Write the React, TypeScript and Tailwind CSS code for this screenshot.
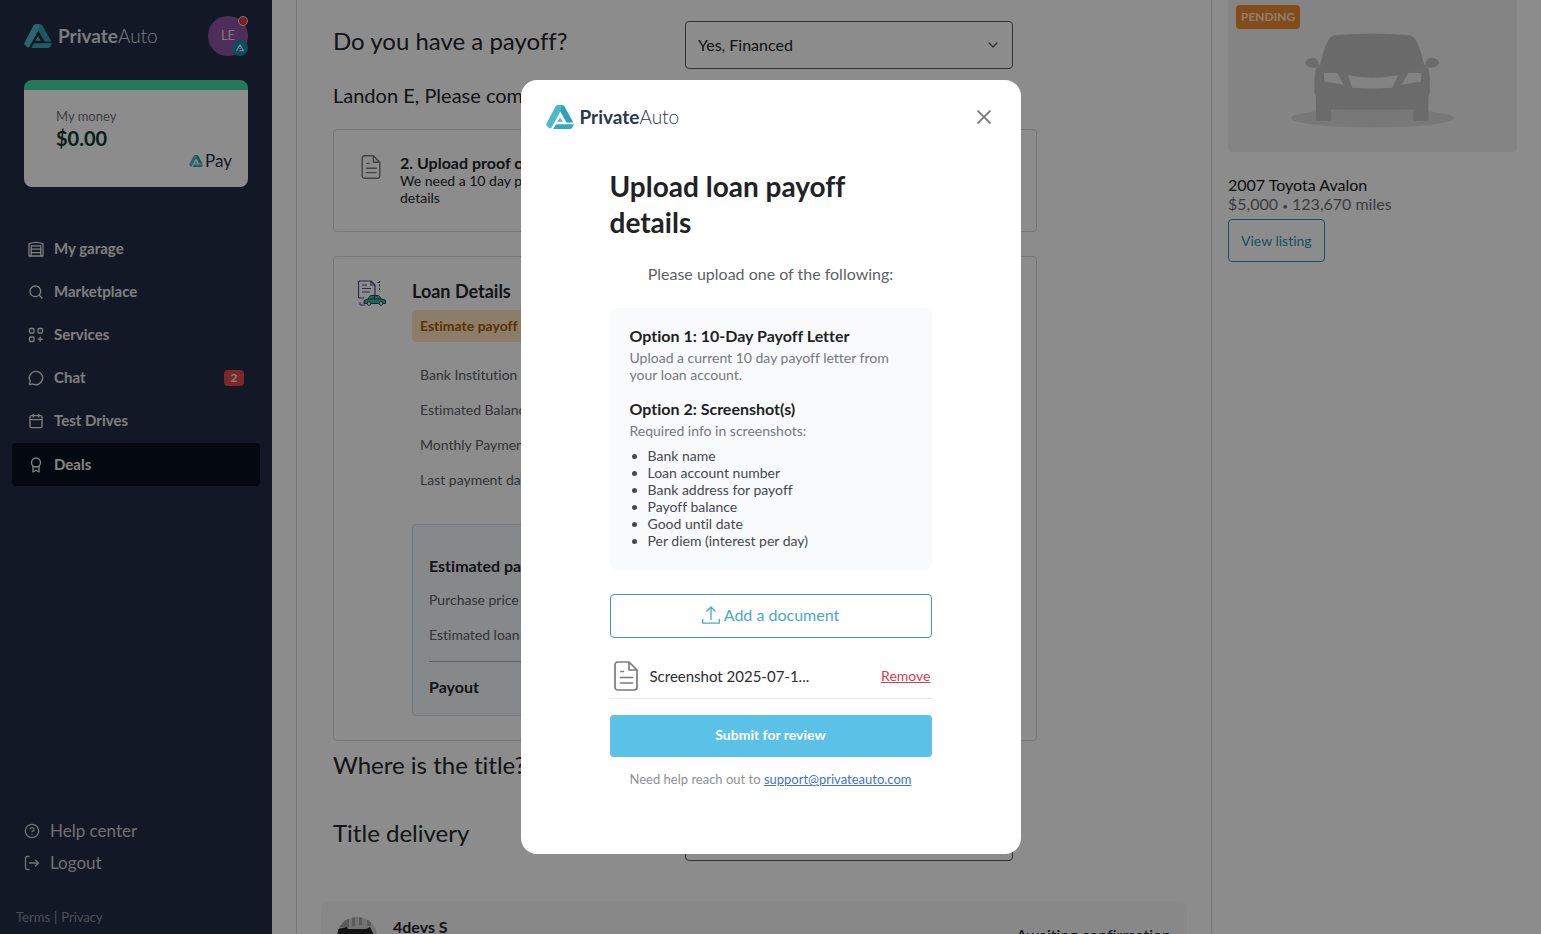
import type { ReactNode } from "react";
import { Calendar, ChevronDown, CircleHelp, MessageCircle, Search } from "lucide-react";

function LogoMark({ className }: { className?: string }) {
  return (
    <svg viewBox="0 0 28 24" className={className} aria-hidden="true">
      <path
        d="M12 0h4q1.700 0 2.500 1.500L27.300 17.600h-6.800L14 6z"
        fill="#2f9fb5"
      />
      <path
        d="M.3 19 9.500 1.500Q10.300 0 12 0h2.500L15.500 3 14 7.200 5.500 22.600q-.6 1-1.600.9-.9 0-1.400-.9L.4 20.200q-.4-.5-.1-1.200z"
        fill="#4bb9c9"
      />
      <path d="M10 19.200H28L26.200 22.800Q25.500 24 24.200 24H7.200z" fill="#35a9bb" />
      <path d="M14 12.500 16.800 16.800h-5.400z" fill="#4bb9c9" />
    </svg>
  );
}

function Logo({ dark }: { dark?: boolean }) {
  return (
    <div className="flex items-center gap-1.5">
      <LogoMark className="h-6 w-7" />
      <span
        className={
          dark ? "text-[19px] leading-[22px] text-[#dfe1e6]" : "text-[19px] leading-[22px] text-[#2b3650]"
        }
      >
        <span className="font-bold">Private</span>
        <span className="font-light">Auto</span>
      </span>
    </div>
  );
}

function Stroke({ children, className = "size-4" }: { children: ReactNode; className?: string }) {
  return (
    <svg
      viewBox="0 0 16 16"
      className={className}
      fill="none"
      stroke="currentColor"
      strokeWidth="1.3"
      strokeLinecap="round"
      strokeLinejoin="round"
      aria-hidden="true"
    >
      {children}
    </svg>
  );
}

const GarageIcon = () => (
  <Stroke>
    <path d="M1 2.800Q8-.2 15 2.800V15h-2.300V4.800H3.300V15H1z" />
    <path d="M3.300 8.200h9.400M3.300 11.600h9.400M3.300 15h9.400" />
  </Stroke>
);

const ServicesIcon = () => (
  <Stroke>
    <rect x="1.500" y="1.500" width="4.500" height="4.500" rx="1" />
    <rect x="10" y="1.500" width="4.500" height="4.500" rx="1" />
    <rect x="1.500" y="10" width="4.500" height="4.500" rx="1" />
    <path d="M12.200 10.200v4M10.200 12.200h4" />
  </Stroke>
);

const DealsIcon = () => (
  <Stroke>
    <circle cx="8" cy="5.500" r="4.500" />
    <path d="M5 9v6l3-1.800L11 15V9" />
  </Stroke>
);

const LogoutIcon = () => (
  <Stroke>
    <path d="M5 1.500H3Q1.500 1.500 1.500 3v10q0 1.500 1.500 1.500h2M5.500 8h9M11.500 5l3 3-3 3" />
  </Stroke>
);

function DocIcon({ className }: { className: string }) {
  return (
    <svg
      viewBox="0 0 24 30"
      className={className}
      fill="none"
      stroke="currentColor"
      strokeWidth="1.7"
      strokeLinejoin="round"
      aria-hidden="true"
    >
      <path d="M4 1h11l8 8v17q0 3-3 3H4q-3 0-3-3V4q0-3 3-3z" />
      <path d="M15 1v8h8" />
      <path d="M7 10.500h2.500M6.500 16.500h12M6.500 22h12" strokeLinecap="round" />
    </svg>
  );
}

function LoanIcon() {
  return (
    <svg viewBox="0 0 28 26" className="h-[26px] w-7" fill="none" strokeLinejoin="round" aria-hidden="true">
      <path d="M6 18H1.500Q.5 18 .5 17V2Q.5 1 1.500 1H13l4 4v10" stroke="#4a4f86" strokeWidth="1.200" />
      <path d="M13 1v4h4M4 5h5M4 8.500h9M4 12h8" stroke="#4a4f86" strokeWidth="1.200" />
      <path d="M21.500 1v11M19.500 2.500h3" stroke="#4a4f86" strokeDasharray="2 1.500" />
      <path d="M2 22v3h5" stroke="#4a4f86" />
      <path
        d="M6 23.500v-3l4-1.500 2.500-3.500h8L23.500 19l4 1.200v3.300z"
        fill="#2fc49a"
        stroke="#33406b"
      />
      <path d="M10 19h13.500M16.500 15.500V19" stroke="#33406b" />
      <circle cx="11" cy="23.500" r="1.800" fill="#fff" stroke="#33406b" />
      <circle cx="23" cy="23.500" r="1.800" fill="#fff" stroke="#33406b" />
    </svg>
  );
}

function CarPlaceholder() {
  return (
    <svg viewBox="845 95 475 280" className="h-[97px] w-[164px]" aria-hidden="true">
      <ellipse cx="1081" cy="344" rx="236" ry="27" fill="#dadada" />
      <path
        d="M970 104Q1080 94 1190 104Q1202 107 1210 124Q1222 150 1231 190L1236 188Q1234 171 1252 169Q1272 171 1274 184Q1268 197 1250 198L1241 197Q1247 212 1247 235V270L1243 284V352H1199V320H961V352H917V284L913 270V235Q913 212 919 197L910 198Q892 197 886 184Q888 171 908 169Q926 171 924 188L929 190Q938 150 950 124Q958 107 970 104Z"
        fill="#c4c4c4"
      />
      <path
        d="M973 107Q1080 98 1187 107Q1198 109 1206 127Q1220 156 1226 188Q1200 210 1155 218Q1080 234 1005 218Q960 210 934 188Q940 156 954 127Q962 109 973 107Z"
        fill="#c1c1c1"
      />
      <path d="M940 213h38l20 34-56-9zM1223 213h-38l-20 34 56-9z" fill="#efefef" />
      <path d="M1010 219q72 16 146 0l-18 37q-56 4-116 0z" fill="#efefef" />
    </svg>
  );
}

const navItems = [
  { label: "My garage", icon: <GarageIcon /> },
  { label: "Marketplace", icon: <Search className="size-4" strokeWidth={2} /> },
  { label: "Services", icon: <ServicesIcon /> },
  { label: "Chat", icon: <MessageCircle className="size-4" strokeWidth={2} />, badge: 2 },
  { label: "Test Drives", icon: <Calendar className="size-4" strokeWidth={2} /> },
  { label: "Deals", icon: <DealsIcon />, active: true },
];

const loanRows = ["Bank Institution", "Estimated Balance", "Monthly Payment", "Last payment date"];

const requiredInfo = [
  "Bank name",
  "Loan account number",
  "Bank address for payoff",
  "Payoff balance",
  "Good until date",
  "Per diem (interest per day)",
];

function Sidebar() {
  return (
    <aside className="flex w-[272px] shrink-0 flex-col bg-[#242d45]">
      <div className="flex items-center justify-between px-6 pt-4">
        <Logo dark />
        <div className="relative flex size-10 items-center justify-center rounded-full bg-[#8d54a5] text-[13px] text-[#e3dbe8]">
          LE
          <span className="absolute top-0 right-0 size-2.5 rounded-full border border-[#f5c6c6] bg-[#e5383b]" />
          <span className="absolute right-0 bottom-0 flex size-4 items-center justify-center rounded-full bg-[#1f87a8]">
            <svg viewBox="0 0 10 9" className="h-2 w-2.5" fill="none" stroke="#e8eef2" strokeWidth="1.300">
              <path d="M1 7.500 5 1l4 6.500H4.500M5 4.500v1" />
            </svg>
          </span>
        </div>
      </div>

      <div className="mx-6 mt-6 h-[107px] rounded-lg border-t-[10px] border-[#42dca8] bg-white pt-4 pr-4 pl-8">
        <p className="text-[13px] leading-5 text-[#6f7378]">My money</p>
        <p className="text-xl leading-6 font-bold text-[#0b3b2e]">$0.00</p>
        <div className="flex items-center justify-end gap-0.5">
          <LogoMark className="h-3 w-3.5" />
          <span className="text-[17px] leading-[22px] text-[#242d45]">Pay</span>
        </div>
      </div>

      <nav className="mt-10 px-3">
        {navItems.map((item) => (
          <a
            key={item.label}
            href="#"
            className={
              item.active
                ? "mt-px flex h-[43px] items-center gap-2.5 rounded bg-[#08111f] px-4 text-[15px] font-bold text-[#f0f1f3]"
                : "flex h-[43px] items-center gap-2.5 rounded px-4 text-[15px] font-bold text-[#e4e6ea]"
            }
          >
            {item.icon}
            <span className="flex-1">{item.label}</span>
            {item.badge && (
              <span className="flex h-4 w-5 items-center justify-center rounded bg-[#e5484d] text-xs text-[#fbe3e3]">
                {item.badge}
              </span>
            )}
          </a>
        ))}
      </nav>

      <div className="mt-auto flex flex-col px-6 text-[17px] leading-8 text-[#c9ccd3]">
        <a href="#" className="flex items-center gap-2.5">
          <CircleHelp className="size-4" strokeWidth={2} />
          Help center
        </a>
        <a href="#" className="flex items-center gap-2.5">
          <LogoutIcon />
          Logout
        </a>
      </div>
      <div className="mt-7 flex gap-1 px-4 pb-[7px] text-[13px] leading-5 text-[#8b91a0]">
        <a href="#">Terms</a>
        <span>|</span>
        <a href="#">Privacy</a>
      </div>
    </aside>
  );
}

function Field({ id, label, value }: { id: string; label: string; value: string }) {
  return (
    <div className="grid h-12 grid-cols-2">
      <label htmlFor={id} className="text-2xl leading-10 text-[#212529]">
        {label}
      </label>
      <div className="relative mr-6">
        <select
          id={id}
          className="h-12 w-full appearance-none rounded border border-[#55585c] bg-white px-3 text-base text-[#212529]"
        >
          <option>{value}</option>
        </select>
        <ChevronDown className="pointer-events-none absolute top-4 right-3 size-4 text-[#555]" strokeWidth={1.8} />
      </div>
    </div>
  );
}

function DealContent() {
  return (
    <main className="ml-6 min-w-0 flex-1 border-x border-[#d8d8d8] px-6">
      <div className="max-w-[728px] px-3 pt-[21px]">
        <Field id="payoff" label="Do you have a payoff?" value="Yes, Financed" />
        <h2 className="mt-2.5 text-xl leading-8 text-[#212529]">
          Landon E, Please complete the following steps
        </h2>

        <section className="mt-[18px] flex h-[103px] gap-[19px] rounded border border-[#d9d9d9] pt-[23px] pl-[27px] text-[#212529]">
          <DocIcon className="mt-0.5 h-6 w-5 text-[#77797c]" />
          <div>
            <h3 className="text-base leading-[19px] font-bold">2. Upload proof of payoff</h3>
            <p className="text-sm leading-[17px]">
              We need a 10 day payoff letter or loan
              <br />
              details
            </p>
          </div>
        </section>

        <section className="mt-6 flex gap-[26px] rounded border border-[#d9d9d9] pt-[23px] pr-6 pb-6 pl-6 text-[#212529]">
          <LoanIcon />
          <div className="flex-1">
            <h3 className="text-lg leading-[22px] font-bold">Loan Details</h3>
            <p className="mt-2 rounded bg-[#fde4bd] px-2 text-sm leading-8 font-bold text-[#a85a04]">
              Estimate payoff
            </p>
            <ul className="mt-[15px] px-2 text-sm leading-[35px] text-[#5b5f64]">
              {loanRows.map((row) => (
                <li key={row}>{row}</li>
              ))}
            </ul>
            <div className="mt-[27px] rounded border border-[#cfd6de] bg-[#f5f8fb] px-4 pt-6 pb-[11px]">
              <h4 className="text-base leading-[33px] font-bold">Estimated payout</h4>
              <p className="text-sm leading-[35px] text-[#5b5f64]">Purchase price</p>
              <p className="text-sm leading-[35px] text-[#5b5f64]">Estimated loan payoff</p>
              <p className="mt-[9px] border-t border-[#a9afb5] pt-2 text-base leading-[34px] font-bold">Payout</p>
            </div>
          </div>
        </section>

        <div className="mt-1 flex flex-col gap-5">
          <Field id="title" label="Where is the title?" value="At the bank" />
          <Field id="delivery" label="Title delivery" value="Select" />
        </div>
      </div>

      <section className="mt-10 flex h-24 justify-between rounded-lg bg-[#f7f7f7] p-4 text-base text-[#212529]">
        <div className="flex gap-4">
          <svg viewBox="0 0 40 40" className="size-10 rounded-full" aria-hidden="true">
            <rect width="40" height="40" fill="#d2d2d2" />
            <path d="M0 0h12v10H0zM15 0h3v9h-3zM22 0h3v8h-3zM30 0h4v9h-4z" fill="#a5a5a5" />
            <path d="M1 12l9-2 1 2h18l4-2 4 8-5 3v18h-5V20l-14-1-3 20H6V21l-6-2z" fill="#252525" />
          </svg>
          <span className="leading-5 font-bold">4devs S</span>
        </div>
        <span className="pt-1.5">Awaiting confirmation</span>
      </section>
    </main>
  );
}

function ListingPanel() {
  return (
    <aside className="w-[329px] shrink-0 pr-6 pl-4">
      <div className="relative flex h-[152px] items-center justify-center rounded-b bg-[#f1f1f1] pt-2">
        <CarPlaceholder />
        <span className="absolute top-[5px] left-2 rounded bg-[#f08a2c] px-[5px] text-xs leading-6 font-bold text-[#fde9d6]">
          PENDING
        </span>
      </div>
      <h2 className="mt-[23px] text-base leading-[19px] text-[#16181b]">2007 Toyota Avalon</h2>
      <p className="text-base leading-[19px] text-[#6c7076]">
        $5,000 <span className="text-[10px] leading-none">•</span> 123,670 miles
      </p>
      <button className="mt-1.5 h-[43px] rounded border border-[#2e93ae] px-3 text-sm text-[#2e93ae]">
        View listing
      </button>
    </aside>
  );
}

function UploadModal() {
  return (
    <div className="fixed inset-0 flex items-center justify-center bg-black/45">
      <div
        role="dialog"
        aria-modal="true"
        aria-labelledby="upload-title"
        className="w-full max-w-[500px] rounded-2xl bg-white px-6 pt-6 pb-[65px]"
      >
        <div className="flex items-center justify-between pl-px">
          <Logo />
          <button aria-label="Close" className="p-1.5 text-[#75777a]">
            <svg viewBox="0 0 14 14" className="size-3.5" fill="none" stroke="currentColor" strokeWidth="1.700">
              <path d="M.5.500l13 13M13.500.500l-13 13" />
            </svg>
          </button>
        </div>

        <div className="mx-auto mt-[38px] w-full max-w-[322px]">
          <h1 id="upload-title" className="text-[28px] leading-9 font-bold text-[#212226]">
            Upload loan payoff details
          </h1>
          <p className="mt-[22px] text-center text-base leading-6 text-[#5e6165]">
            Please upload one of the following:
          </p>

          <div className="mt-[22px] rounded-lg bg-[#f9fafc] px-5 pt-[18px] pb-[21px] text-sm leading-[17px]">
            <h2 className="text-base leading-[19px] font-bold text-[#1d1f23]">Option 1: 10-Day Payoff Letter</h2>
            <p className="mt-1 text-[#75787d]">Upload a current 10 day payoff letter from your loan account.</p>
            <h2 className="mt-4 text-base leading-[19px] font-bold text-[#1d1f23]">Option 2: Screenshot(s)</h2>
            <p className="mt-1 text-[#75787d]">Required info in screenshots:</p>
            <ul className="mt-2 list-disc pl-[18px] text-[#45484c]">
              {requiredInfo.map((info) => (
                <li key={info}>{info}</li>
              ))}
            </ul>
          </div>

          <button className="mt-6 flex h-11 w-full items-center justify-center gap-1 rounded border border-[#3f97b3] pb-0.5 text-base text-[#4aa9c6]">
            <svg viewBox="0 0 18 18" className="size-[18px]" fill="none" stroke="currentColor" strokeWidth="1.300">
              <path d="M.7 13v4.200h16.600V13M9 14V1M4.500 5.500 9 1l4.500 4.500" />
            </svg>
            Add a document
          </button>

          <div className="mt-4 flex h-[45px] items-center border-b border-[#e6e8ea] pr-px pl-1">
            <DocIcon className="h-[30px] w-6 text-[#77797c]" />
            <span className="ml-3 flex-1 text-[15px] text-[#2b2d30]">Screenshot 2025-07-1...</span>
            <button className="text-sm text-[#d5404e] underline">Remove</button>
          </div>

          <button className="mt-4 h-[42px] w-full rounded bg-[#5cc1e6] pb-0.5 text-sm font-bold text-white">
            Submit for review
          </button>
          <p className="mt-3 text-center text-[13px] leading-5 text-[#8e9194]">
            Need help reach out to{" "}
            <a href="mailto:support@privateauto.com" className="text-[#3f74c4] underline">
              support@privateauto.com
            </a>
          </p>
        </div>
      </div>
    </div>
  );
}

export default function App() {
  return (
    <div className="flex h-screen overflow-hidden bg-white font-['Lato',sans-serif] [font-variant-ligatures:none]">
      <Sidebar />
      <DealContent />
      <ListingPanel />
      <UploadModal />
    </div>
  );
}
